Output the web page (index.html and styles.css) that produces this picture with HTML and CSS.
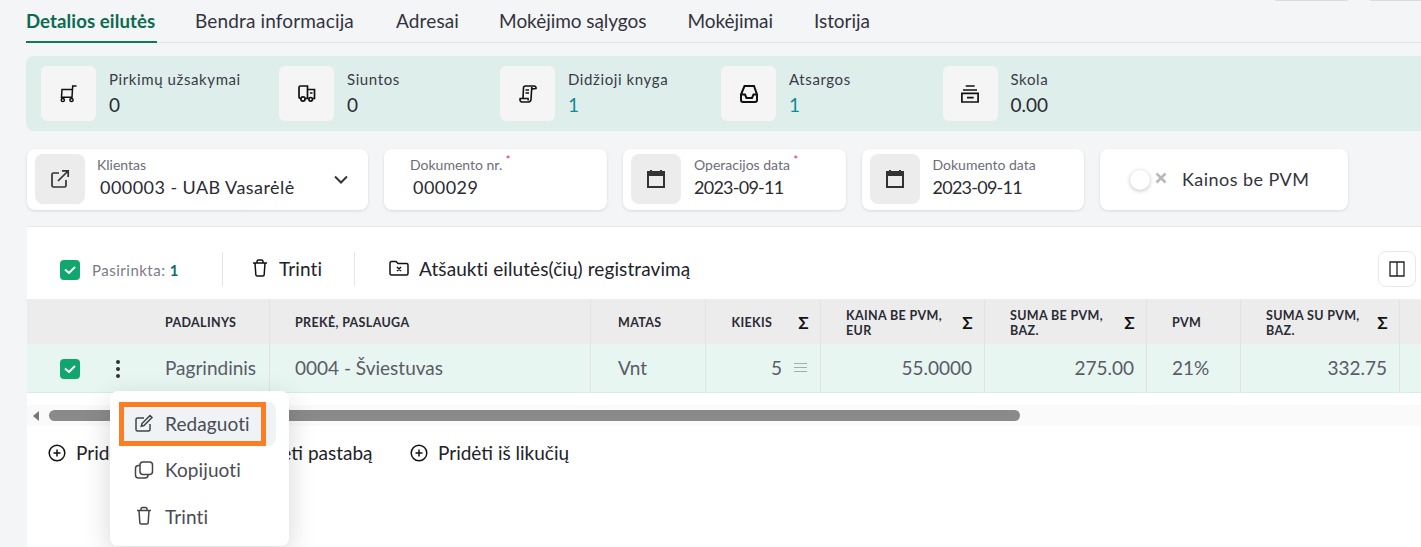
FILE: index.html
```html
<!DOCTYPE html>
<html lang="lt">
<head>
<meta charset="utf-8">
<title>Detalios eilutės</title>
<link rel="stylesheet" href="styles.css">
</head>
<body>
<div class="page">
  <nav class="tabs">
    <a class="tab active">Detalios eilutės</a>
    <a class="tab t-wide">Bendra informacija</a>
    <a class="tab t-addr">Adresai</a>
    <a class="tab t-narrow">Mokėjimo sąlygos</a>
    <a class="tab t-narrow">Mokėjimai</a>
    <a class="tab t-narrow">Istorija</a>
    <span class="edge e1"></span>
    <span class="edge e2"></span>
  </nav>

  <section class="stats">
    <div class="stat s1">
      <div class="stat-icon"><svg width="18" height="18" viewBox="0 0 18 18" fill="none" stroke="#111" stroke-width="1.500"><path d="M16.500 1h-3.800L12 12.200H1.500L2 4.500h10.700"/><circle cx="2.800" cy="15" r="1.600"/><circle cx="11.500" cy="15" r="1.600"/></svg></div>
      <div class="stat-text"><span class="stat-label">Pirkimų užsakymai</span><span class="stat-value">0</span></div>
    </div>
    <div class="stat s2">
      <div class="stat-icon"><svg width="18" height="18" viewBox="0 0 18 18" fill="none" stroke="#111" stroke-width="1.700"><path d="M2.800 13.500H2.500A1.500 1.500 0 0 1 1 12V2.500A1.500 1.500 0 0 1 2.500 1h7v12.500H7.200M9.500 4.500h7v9h-2M9.500 13.500h1.300M12 8h2.500"/><circle cx="5" cy="14" r="2.100"/><circle cx="12.700" cy="14.300" r="1.800"/></svg></div>
      <div class="stat-text"><span class="stat-label">Siuntos</span><span class="stat-value">0</span></div>
    </div>
    <div class="stat s3">
      <div class="stat-icon"><svg width="18" height="18" viewBox="0 0 18 18" fill="none" stroke="#111" stroke-width="1.600"><path d="M4 13l.5-10A2 2 0 0 1 6.500 1H15a2 2 0 0 1 2 2.500l-4 .5M12.800 2 12 14.500A2.700 2.700 0 0 1 9.500 17H3A2.200 2.200 0 0 1 1 14.500l.2-1H9l.3 2M6.500 5H10M6.500 8H10"/></svg></div>
      <div class="stat-text"><span class="stat-label">Didžioji knyga</span><span class="stat-value link">1</span></div>
    </div>
    <div class="stat s4">
      <div class="stat-icon"><svg width="18" height="18" viewBox="0 0 18 18" fill="none" stroke="#111" stroke-width="2"><path d="M4.500 1h9.500l3 8.500V15a2 2 0 0 1-2 2H3a2 2 0 0 1-2-2V9.500zM1 9.500h4l1.500 3.500H12l1.500-3.500H17"/></svg></div>
      <div class="stat-text"><span class="stat-label">Atsargos</span><span class="stat-value link">1</span></div>
    </div>
    <div class="stat s5">
      <div class="stat-icon"><svg width="18" height="18" viewBox="0 0 18 18" fill="none" stroke="#111" stroke-width="1.700"><path d="M4.700 1h9M2 5h14M.9 8.300h16.200V17H.9zM6 12.700h6.700"/></svg></div>
      <div class="stat-text"><span class="stat-label">Skola</span><span class="stat-value">0.00</span></div>
    </div>
  </section>

  <section class="fields">
    <div class="card f-client">
      <div class="card-icon"><svg width="20" height="20" viewBox="0 0 20 20" fill="none" stroke="#333" stroke-width="1.700"><path d="M9 4H3.500A1.500 1.500 0 0 0 2 5.500v11A1.500 1.500 0 0 0 3.500 18h11a1.500 1.500 0 0 0 1.500-1.500V11M8 12 18 2M12 1.800h6.200V8"/></svg></div>
      <div class="card-text"><span class="card-label">Klientas</span><span class="card-value indent">000003 - UAB Vasarėlė</span></div>
      <svg class="chevron" width="14" height="9" viewBox="0 0 14 9" fill="none" stroke="#333" stroke-width="2"><path d="M1 1.500 7 7.500 13 1.500"/></svg>
    </div>
    <div class="card f-doc">
      <div class="card-text"><span class="card-label">Dokumento nr. <sup class="req">*</sup></span><span class="card-value indent">000029</span></div>
    </div>
    <div class="card f-date">
      <div class="card-icon"><svg width="18" height="18" viewBox="0 0 18 18"><path fill="#333" fill-rule="evenodd" d="M0 1h3V0h2v1h8V0h2v1h3v17H0zM2 6v10h14V6z"/></svg></div>
      <div class="card-text"><span class="card-label">Operacijos data <sup class="req">*</sup></span><span class="card-value date">2023-09-11</span></div>
    </div>
    <div class="card f-date">
      <div class="card-icon"><svg width="18" height="18" viewBox="0 0 18 18"><path fill="#333" fill-rule="evenodd" d="M0 1h3V0h2v1h8V0h2v1h3v17H0zM2 6v10h14V6z"/></svg></div>
      <div class="card-text"><span class="card-label">Dokumento data</span><span class="card-value date">2023-09-11</span></div>
    </div>
    <div class="card f-toggle">
      <span class="knob"></span>
      <svg class="knob-x" width="12" height="12" viewBox="0 0 12 12" fill="none" stroke="#b9b9b9" stroke-width="2.600"><path d="M1.500 1.500l9 9M10.500 1.500l-9 9"/></svg>
      <span class="toggle-label">Kainos be PVM</span>
    </div>
  </section>

  <section class="panel">
    <div class="toolbar">
      <span class="check"><svg width="14" height="10" viewBox="0 0 14 10" fill="none" stroke="#fff" stroke-width="2"><path d="M2 4.500 6 8 12 2"/></svg></span>
      <span class="selected">Pasirinkta: <b>1</b></span>
      <span class="divider"></span>
      <span class="action a-del"><svg width="16" height="18" viewBox="0 0 16 18" fill="none" stroke="#111" stroke-width="1.500"><path d="M1 4h14M5 4V2.500A1.500 1.500 0 0 1 6.500 1h3A1.500 1.500 0 0 1 11 2.500V4M3 4l.8 11.500A1.500 1.500 0 0 0 5.300 17h5.400a1.500 1.500 0 0 0 1.500-1.500L13 4"/></svg>Trinti</span>
      <span class="divider"></span>
      <span class="action a-undo"><svg width="20" height="16" viewBox="0 0 20 16" fill="none" stroke="#111" stroke-width="1.500"><path d="M1 3a1.500 1.500 0 0 1 1.500-1.500H7l2 2h8.500A1.500 1.500 0 0 1 19 5v8.500a1.500 1.500 0 0 1-1.500 1.500h-15A1.500 1.500 0 0 1 1 13.500zM8 7l4 4M12 7l-4 4"/></svg>Atšaukti eilutės(čių) registravimą</span>
      <span class="columns-btn"><svg width="16" height="16" viewBox="0 0 16 16" fill="none" stroke="#222" stroke-width="1.300"><path d="M1 1h14v14H1zM8 1v14"/></svg></span>
    </div>

    <div class="grid">
      <div class="cell head c-check"></div>
      <div class="cell head c-dots"></div>
      <div class="cell head c-dept">PADALINYS</div>
      <div class="cell head c-item">PREKĖ, PASLAUGA</div>
      <div class="cell head c-unit">MATAS</div>
      <div class="cell head c-qty"><span class="h-right">KIEKIS</span><span class="sigma">Σ</span></div>
      <div class="cell head c-price"><span>KAINA BE PVM,<br>EUR</span><span class="sigma">Σ</span></div>
      <div class="cell head c-sum"><span>SUMA BE PVM,<br>BAZ.</span><span class="sigma">Σ</span></div>
      <div class="cell head c-vat">PVM</div>
      <div class="cell head c-total"><span>SUMA SU PVM,<br>BAZ.</span><span class="sigma">Σ</span></div>
      <div class="cell head c-rest"></div>

      <div class="cell row c-check"><span class="check"><svg width="14" height="10" viewBox="0 0 14 10" fill="none" stroke="#fff" stroke-width="2"><path d="M2 4.500 6 8 12 2"/></svg></span></div>
      <div class="cell row c-dots"><span class="dots"><i></i><i></i><i></i></span></div>
      <div class="cell row c-dept">Pagrindinis</div>
      <div class="cell row c-item">0004 - Šviestuvas</div>
      <div class="cell row c-unit">Vnt</div>
      <div class="cell row c-qty num"><span>5</span><span class="qty-lines"><i></i><i></i><i></i></span></div>
      <div class="cell row c-price num">55.0000</div>
      <div class="cell row c-sum num">275.00</div>
      <div class="cell row c-vat">21%</div>
      <div class="cell row c-total num">332.75</div>
      <div class="cell row c-rest"></div>
    </div>

    <div class="scrollbar">
      <span class="arrow"></span>
      <span class="thumb"></span>
    </div>

    <div class="add-row">
      <span class="add a1"><svg width="18" height="18" viewBox="0 0 18 18" fill="none" stroke="#111" stroke-width="1.500"><circle cx="9" cy="9" r="7.800"/><path d="M9 5.500v7M5.500 9h7"/></svg>Pridėti eilutę</span>
      <span class="add a2"><svg width="18" height="18" viewBox="0 0 18 18" fill="none" stroke="#111" stroke-width="1.500"><circle cx="9" cy="9" r="7.800"/><path d="M9 5.500v7M5.500 9h7"/></svg>Pridėti pastabą</span>
      <span class="add a3"><svg width="18" height="18" viewBox="0 0 18 18" fill="none" stroke="#111" stroke-width="1.500"><circle cx="9" cy="9" r="7.800"/><path d="M9 5.500v7M5.500 9h7"/></svg>Pridėti iš likučių</span>
    </div>
  </section>

  <div class="menu">
    <div class="menu-item hover"><svg width="20" height="20" viewBox="0 0 20 20" fill="none" stroke="#444" stroke-width="1.500"><path d="M16 11v5.500a1.500 1.500 0 0 1-1.500 1.500h-11A1.500 1.500 0 0 1 2 16.500v-10A1.500 1.500 0 0 1 3.500 5H10M8 10.500 16 2.500l2 2-8 8-2.700.7z"/></svg>Redaguoti</div>
    <div class="menu-item"><svg width="20" height="20" viewBox="0 0 20 20" fill="none" stroke="#444" stroke-width="1.500"><rect x="6" y="2" width="12.500" height="12.500" rx="3"/><path d="M6 5.500H4.500a3 3 0 0 0-3 3V15a3 3 0 0 0 3 3H11a3 3 0 0 0 3-3v-.5"/></svg>Kopijuoti</div>
    <div class="menu-item"><svg width="20" height="20" viewBox="0 0 20 20" fill="none" stroke="#444" stroke-width="1.500"><path d="M3 4.500h14M7 4.500V3a1.500 1.500 0 0 1 1.500-1.500h3A1.500 1.500 0 0 1 13 3v1.500M5 4.500l.8 12A1.500 1.500 0 0 0 7.300 18h5.400a1.500 1.500 0 0 0 1.500-1.500l.8-12"/></svg>Trinti</div>
    <div class="highlight"></div>
  </div>
</div>
</body>
</html>
```
FILE: styles.css
```css
* { box-sizing: border-box; }
html, body { margin: 0; height: 100%; }
body {
  background: #f4f5f7;
  font-family: "Lato", "Noto Sans", sans-serif;
  color: #2b2b33;
  overflow: hidden;
}
.page { position: relative; width: 1421px; height: 547px; overflow: hidden; padding-left: 26px; }

.tabs { display: flex; height: 43px; border-bottom: 1px solid #e3e4e7; }
.tab { font-size: 19px; line-height: 42px; height: 43px; color: #33333d; margin-right: 41px; letter-spacing: .15px; white-space: nowrap; }
.tab.active { width: 131px; margin-right: 38px; font-size: 18.6px; color: #0b6b50; font-weight: 700; border-bottom: 2px solid #0d7a5c; letter-spacing: .1px; }
.t-wide { margin-right: 42px; }
.t-addr { margin-right: 40px; }
.t-narrow { letter-spacing: -.05px; }
.edge { height: 1px; background: #dcdde0; }
.e1 { width: 73px; margin-left: auto; }
.e2 { width: 51px; margin-left: 22px; }

.stats { display: flex; height: 75px; margin-top: 13px; background: #deeeea; border-radius: 8px 0 0 8px; padding: 10px 0 0 15px; }
.stat { display: flex; }
.s1 { width: 238px; } .s2 { width: 221px; } .s3 { width: 221px; } .s4 { width: 221.500px; }
.stat-icon { width: 55px; height: 55px; background: #f5f5f6; border-radius: 6px; display: flex; align-items: center; justify-content: center; }
.stat-text { display: flex; flex-direction: column; margin-left: 13px; }
.stat-label { font-size: 15px; line-height: 18px; margin-top: 4px; color: #3a3a48; letter-spacing: .6px; white-space: nowrap; }
.stat-value { font-size: 19px; line-height: 22px; margin-top: 6px; color: #2b2b33; }
.stat-value.link { color: #0f8a9a; }

.fields { display: flex; margin: 18px 0 0 1px; height: 61px; }
.card { height: 61px; background: #fff; border-radius: 8px; box-shadow: 0 1px 3px rgba(0,0,0,.12); display: flex; align-items: flex-start; padding: 5px 8px; margin-right: 16px; flex: none; }
.f-client { width: 341px; }
.f-client .card-text { margin-left: 12px; }
.f-doc { width: 223px; padding-left: 26px; }
.f-date { width: 222.500px; }
.f-toggle { width: 248px; align-items: center; padding: 0 0 0 30px; }
.card-icon { width: 50px; height: 50px; background: #ececed; border-radius: 8px; display: flex; align-items: center; justify-content: center; flex: none; }
.card-text { display: flex; flex-direction: column; margin-left: 13px; }
.f-doc .card-text { margin-left: 0; }
.card-label { font-size: 14px; line-height: 16px; margin-top: 3px; color: #6d6d78; white-space: nowrap; }
.card-value { font-size: 18px; line-height: 22px; margin-top: 3px; color: #2b2b33; white-space: nowrap; letter-spacing: .45px; }
.card-value.indent { margin-left: 3px; }
.card-value.date { letter-spacing: -.75px; }
.req { color: #e0245e; font-size: 11px; line-height: 0; }
.chevron { margin-left: auto; margin-top: 21px; margin-right: 12px; }
.knob { width: 20px; height: 20px; border-radius: 50%; background: #fff; box-shadow: 0 1px 4px rgba(0,0,0,.25); flex: none; }
.knob-x { margin-left: 5px; margin-top: -4px; flex: none; }
.toggle-label { font-size: 18px; margin-left: 15px; margin-top: -1px; color: #33333d; letter-spacing: .45px; white-space: nowrap; }

.panel { margin: 16px 0 0 1px; background: #fff; height: 400px; border-top: 1px solid #e8e8ea; }
.toolbar { height: 72px; position: relative; display: flex; align-items: center; padding-top: 12px; }
.check { width: 20px; height: 20px; background: #12a66f; border-radius: 4px; display: inline-flex; align-items: center; justify-content: center; flex: none; }
.toolbar > .check { margin-left: 33px; margin-top: 1px; }
.selected { font-size: 15px; letter-spacing: .5px; color: #7b7b84; margin-left: 12px; margin-top: 2px; width: 130px; white-space: nowrap; }
.selected b { color: #0f6e6e; }
.divider { width: 1px; height: 34px; background: #e4e4e6; flex: none; }
.action { display: flex; align-items: center; font-size: 19px; letter-spacing: .1px; color: #22222a; white-space: nowrap; margin-top: -2px; }
.action svg { flex: none; }
.a-del { margin-left: 29px; width: 102px; }
.a-del svg { margin-right: 11px; }
.a-undo { margin-left: 34px; }
.a-undo svg { margin-right: 10px; }
.columns-btn { position: absolute; right: 5px; top: 24px; width: 38px; height: 36px; border: 1px solid #e8e8ea; border-radius: 8px; background: #fff; display: flex; align-items: center; justify-content: center; }

.grid { display: grid; grid-template-columns: 64px 54px 125px 321px 115px 115px 164px 162px 94px 159px 1fr; }
.cell { display: flex; align-items: center; border-right: 1px solid #e3e3e5; padding: 0 11px 0 25px; min-width: 0; }
.head { height: 45px; padding-top: 2px; background: #ececed; font-size: 12.500px; font-weight: 700; color: #2b2b33; line-height: 15px; letter-spacing: .35px; white-space: nowrap; }
.row { height: 49px; background: #e8f6f2; font-size: 19px; color: #5b5b65; border-bottom: 1px solid #e0e8e5; padding-bottom: 1px; }
.c-check, .c-dots { border-right: none; }
.c-check { padding-left: 33px; padding-right: 0; }
.c-dots { padding-left: 25px; padding-right: 0; }
.row .check, .dots { margin-top: 3px; }
.c-dept { padding-left: 20px; padding-right: 0; }
.c-unit { padding-left: 27px; }
.num { justify-content: flex-end; padding-right: 12px; }
.sigma { font-size: 17px; font-weight: 700; color: #111; margin-left: auto; }
.h-right { margin-left: auto; }
.c-qty .sigma { margin-left: 0; padding-left: 26px; }
.c-rest { border-right: none; }
.dots { display: flex; flex-direction: column; gap: 3px; }
.dots i { width: 4px; height: 4px; border-radius: 50%; background: #333; }
.qty-lines { display: flex; flex-direction: column; gap: 3px; margin-left: 12px; margin-right: 1px; }
.qty-lines i { width: 13px; height: 1px; background: #aaa; }

.scrollbar { height: 21px; margin-top: 12px; display: flex; align-items: center; padding-left: 6px; background: #fafafa; }
.arrow { width: 0; height: 0; border-style: solid; border-width: 5px 6px 5px 0; border-color: transparent #777 transparent transparent; }
.thumb { width: 971px; height: 11px; background: #8a8a8a; border-radius: 6px; margin-left: 10px; }

.add-row { position: relative; height: 60px; font-size: 19px; color: #22222a; }
.add { position: absolute; top: 15px; display: flex; align-items: center; gap: 10px; white-space: nowrap; }
.a1 { left: 21px; } .a2 { left: 193px; } .a3 { left: 383px; }

.menu { position: absolute; left: 110px; top: 391px; width: 179px; height: 155px; background: #fff; border-radius: 8px; box-shadow: 0 8px 28px rgba(0,0,0,.16); padding: 11px 13px 0 9px; }
.menu-item { display: flex; align-items: center; height: 44px; margin-bottom: 2.500px; padding: 0 0 2px 15px; font-size: 19px; letter-spacing: .1px; color: #4b4b55; border-radius: 8px; gap: 11px; }
.menu-item.hover { background: #eff3f6; }
.highlight { position: absolute; left: 9px; top: 11px; width: 147px; height: 44px; border: 5px solid #fb7e24; }
```
